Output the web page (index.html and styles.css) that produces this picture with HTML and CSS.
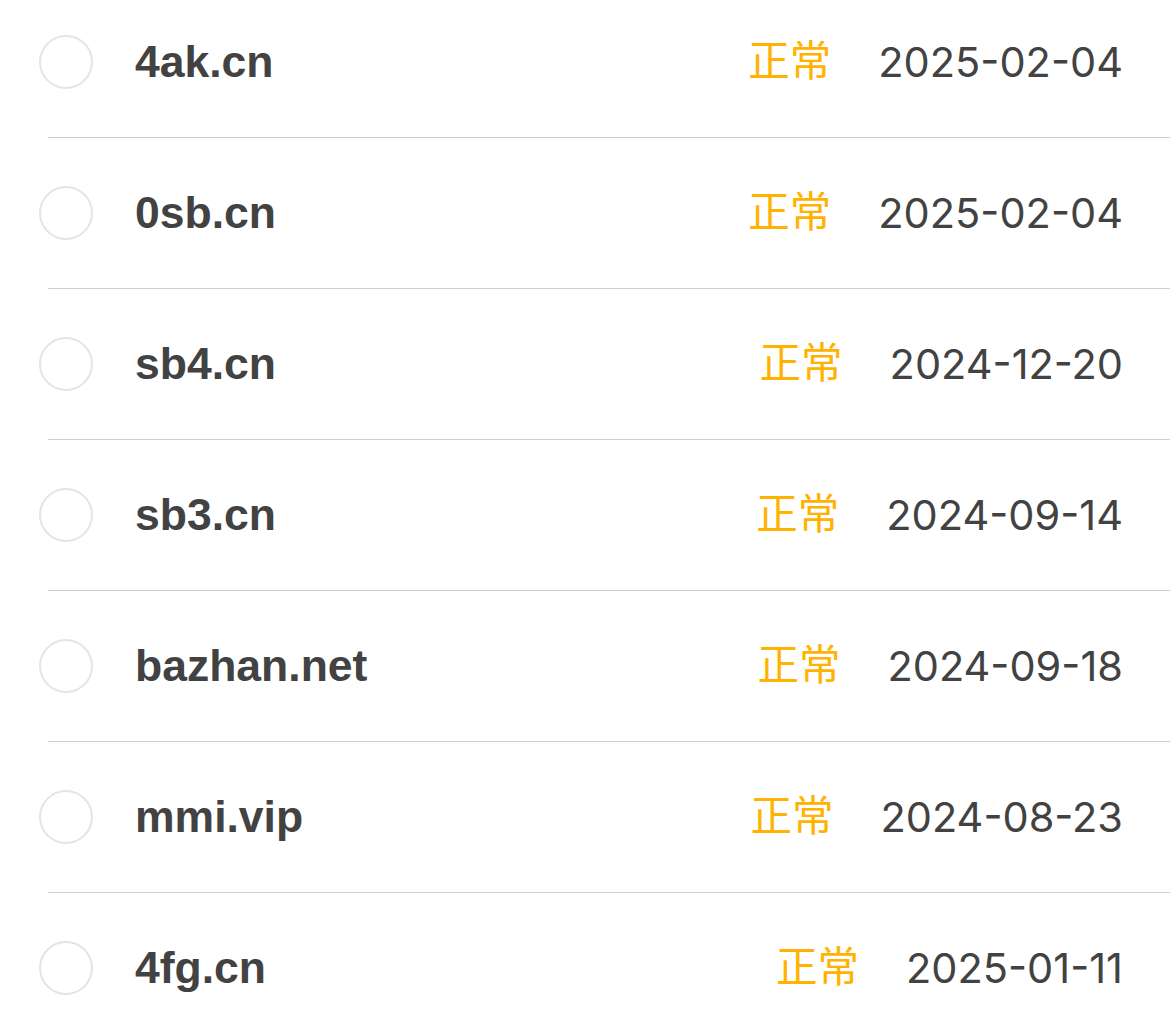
FILE: index.html
```html
<!DOCTYPE html>
<html lang="zh">
<head>
<meta charset="utf-8">
<link rel="stylesheet" href="styles.css">
</head>
<body>
<ul class="list">
  <li class="item"><div class="inner"><span class="check"></span><span class="name">4ak.cn</span><span class="meta"><span class="status">正常</span><span class="date">2025-02-04</span></span></div></li>
  <li class="item"><div class="inner"><span class="check"></span><span class="name">0sb.cn</span><span class="meta"><span class="status">正常</span><span class="date">2025-02-04</span></span></div></li>
  <li class="item"><div class="inner"><span class="check"></span><span class="name">sb4.cn</span><span class="meta"><span class="status">正常</span><span class="date">2024-12-20</span></span></div></li>
  <li class="item"><div class="inner"><span class="check"></span><span class="name">sb3.cn</span><span class="meta"><span class="status">正常</span><span class="date">2024-09-14</span></span></div></li>
  <li class="item"><div class="inner"><span class="check"></span><span class="name">bazhan.net</span><span class="meta"><span class="status">正常</span><span class="date">2024-09-18</span></span></div></li>
  <li class="item"><div class="inner"><span class="check"></span><span class="name">mmi.vip</span><span class="meta"><span class="status">正常</span><span class="date">2024-08-23</span></span></div></li>
  <li class="item"><div class="inner"><span class="check"></span><span class="name">4fg.cn</span><span class="meta"><span class="status">正常</span><span class="date">2025-01-11</span></span></div></li>
</ul>
</body>
</html>
```
FILE: styles.css
```css
html, body {
  margin: 0;
  padding: 0;
  background: #ffffff;
  overflow: hidden;
}
.list {
  list-style: none;
  margin: -13px 0 0 0;
  padding: 0;
}
.item {
  padding-left: 48px;
}
.inner {
  display: flex;
  align-items: center;
  height: 150px;
  border-bottom: 1px solid #cfcfcf;
  padding-right: 47px;
}
.check {
  flex: none;
  box-sizing: border-box;
  width: 54px;
  height: 54px;
  margin-left: -9px;
  border: 2.5px solid #e4e4e4;
  border-radius: 50%;
}
.name {
  margin-left: 42px;
  font-family: "Liberation Sans", Arial, sans-serif;
  font-weight: bold;
  font-size: 44.5px;
  color: #424242;
}
.meta {
  margin-left: auto;
  display: flex;
  align-items: center;
  gap: 47px;
}
.status {
  font-family: "Noto Sans CJK SC", sans-serif;
  font-size: 41.5px;
  color: #ffb300;
  margin-bottom: 9px;
}
.date {
  font-family: "Inter", sans-serif;
  font-size: 41.5px;
  color: #424242;
}
```
